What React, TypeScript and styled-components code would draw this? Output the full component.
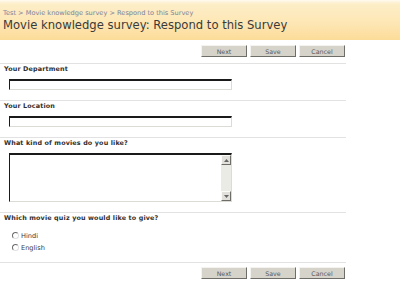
import React from "react";
import styled, { createGlobalStyle } from "styled-components";

const GlobalStyle = createGlobalStyle`
  html, body {
    margin: 0;
    padding: 0;
    background: #ffffff;
  }
  body {
    font-family: "DejaVu Sans", Verdana, sans-serif;
    color: #333333;
  }
`;

const Page = styled.div`
  width: 400px;
  height: 291px;
  overflow: hidden;
  background: #ffffff;
`;

const Header = styled.div`
  height: 40px;
  box-sizing: border-box;
  padding: 9px 0 0 3px;
  background: linear-gradient(#fffaf0 0px, #fdeec8 4px, #fde6b3 60%, #fcdc98 100%);
`;

const Breadcrumb = styled.div`
  font-size: 6.6px;
  line-height: 9px;
  color: #7a829c;
  white-space: nowrap;
`;

const Title = styled.h1`
  margin: 0;
  font-size: 11.6px;
  font-weight: normal;
  line-height: 15px;
  color: #3a3a3a;
  white-space: nowrap;
`;

const Form = styled.div`
  width: 346px;
`;

const ButtonBar = styled.div<{ $top: number }>`
  display: flex;
  justify-content: flex-end;
  gap: 3px;
  padding: ${(p) => p.$top}px 1px 0 0;
  height: 12px;
  margin-bottom: 6px;
`;

const Button = styled.button`
  width: 46px;
  height: 12px;
  padding: 0;
  box-sizing: border-box;
  background: #d6d3cb;
  border: 1px solid;
  border-color: #f4f3ef #6f6d68 #6f6d68 #f4f3ef;
  font-family: "DejaVu Sans", Tahoma, sans-serif;
  font-size: 6.3px;
  line-height: 9px;
  color: #5a5a5a;
`;

const Section = styled.div<{ $bottom: number }>`
  border-top: 1px solid #e2e2e2;
  padding: 0 0 ${(p) => p.$bottom}px 0;
`;

const Label = styled.div<{ $gap: number }>`
  padding-left: 4px;
  font-size: 6.4px;
  line-height: 10px;
  font-weight: bold;
  color: #2e2e2e;
  letter-spacing: 0.15px;
  margin-bottom: ${(p) => p.$gap}px;
  white-space: nowrap;
`;

const TextInput = styled.div`
  margin-left: 9px;
  width: 223px;
  height: 11px;
  box-sizing: border-box;
  border-style: solid;
  border-width: 2px 1px 1px 1px;
  border-color: #1a1a1a #dcdcd6 #dcdcd6 #1a1a1a;
  background: #ffffff;
`;

const TextArea = styled.div`
  margin-left: 9px;
  width: 223px;
  height: 49px;
  box-sizing: border-box;
  display: flex;
  border-style: solid;
  border-width: 2px 1px 1px 1px;
  border-color: #1a1a1a #dcdcd6 #dcdcd6 #1a1a1a;
  background: #ffffff;
`;

const TextBody = styled.div`
  flex: 1;
`;

const ScrollBar = styled.div`
  width: 10px;
  display: flex;
  flex-direction: column;
  justify-content: space-between;
  background: #ebebe6;
`;

const ScrollButton = styled.div`
  height: 10px;
  box-sizing: border-box;
  display: flex;
  align-items: center;
  justify-content: center;
  background: #e2e0da;
  border: 1px solid;
  border-color: #fbfbf8 #6f6d68 #6f6d68 #fbfbf8;
`;

const RadioRow = styled.label`
  display: flex;
  align-items: center;
  height: 12px;
  padding-left: 12px;
  font-size: 6.6px;
  color: #3a3a3a;
`;

const RadioDot = styled.span`
  width: 7px;
  height: 7px;
  box-sizing: border-box;
  border-radius: 50%;
  border: 1px solid;
  border-color: #6a6a6a #e0e0e0 #e0e0e0 #6a6a6a;
  background: #ffffff;
  margin-right: 2px;
  margin-top: -1px;
`;

const Arrow = ({ down }: { down?: boolean }) => (
  <svg width="5" height="3" viewBox="0 0 5 3">
    <path d={down ? "M0 0h5L2.5 3z" : "M2.5 0L5 3H0z"} fill="#666" />
  </svg>
);

const Buttons = ({ top }: { top: number }) => (
  <ButtonBar $top={top}>
    <Button>Next</Button>
    <Button>Save</Button>
    <Button>Cancel</Button>
  </ButtonBar>
);

export default function App() {
  return (
    <Page>
      <GlobalStyle />
      <Header>
        <Breadcrumb>Test &gt; Movie knowledge survey &gt; Respond to this Survey</Breadcrumb>
        <Title>Movie knowledge survey: Respond to this Survey</Title>
      </Header>
      <Form>
        <Buttons top={5} />
        <Section $bottom={10}>
          <Label $gap={5}>Your Department</Label>
          <TextInput />
        </Section>
        <Section $bottom={10}>
          <Label $gap={5}>Your Location</Label>
          <TextInput />
        </Section>
        <Section $bottom={10}>
          <Label $gap={5}>What kind of movies do you like?</Label>
          <TextArea>
            <TextBody />
            <ScrollBar>
              <ScrollButton>
                <Arrow />
              </ScrollButton>
              <ScrollButton>
                <Arrow down />
              </ScrollButton>
            </ScrollBar>
          </TextArea>
        </Section>
        <Section $bottom={8}>
          <Label $gap={7}>Which movie quiz you would like to give?</Label>
          <RadioRow>
            <RadioDot />
            Hindi
          </RadioRow>
          <RadioRow>
            <RadioDot />
            English
          </RadioRow>
        </Section>
        <Section $bottom={0}>
          <Buttons top={4} />
        </Section>
      </Form>
    </Page>
  );
}
